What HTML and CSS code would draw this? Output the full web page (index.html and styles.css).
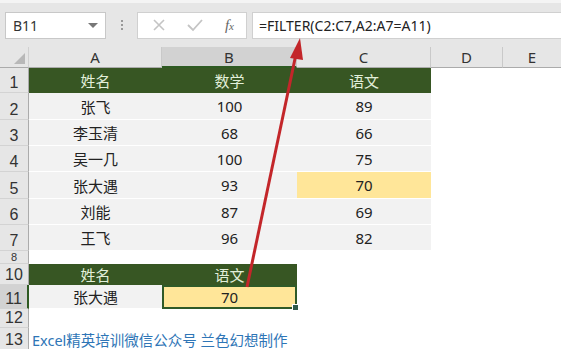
FILE: index.html
```html
<!DOCTYPE html>
<html lang="zh">
<head>
	<meta charset="UTF-8">
	<title>FILTER</title>
	<link rel="stylesheet" href="styles.css">
</head>
<body>
	<div class="bar">
		<div class="namebox">
			<span>B11</span>
			<span class="caret"></span>
		</div>
		<div class="dots"></div>
		<div class="fxbox">
			<svg width="14" height="14" viewBox="0 0 14 14"><path d="M2 2L12 12M12 2L2 12" stroke="#c4c4c4" stroke-width="1.6"/></svg>
			<svg width="16" height="14" viewBox="0 0 16 14"><path d="M1 7L6 12L15 2" stroke="#c4c4c4" stroke-width="1.8" fill="none"/></svg>
			<span class="fx"><i>f</i><small>x</small></span>
		</div>
		<div class="formula">=FILTER(C2:C7,A2:A7=A11)</div>
	</div>

	<div class="sheet">
		<div class="corner"><span class="tri"></span></div>
		<div class="colh">A</div>
		<div class="colh sel">B</div>
		<div class="colh">C</div>
		<div class="colh">D</div>
		<div class="colh last">E</div>

		<div class="rowh">1</div>
		<div class="cell head">姓名</div><div class="cell head">数学</div><div class="cell head">语文</div><div class="cell"></div><div class="cell"></div>

		<div class="rowh">2</div>
		<div class="cell data">张飞</div><div class="cell data">100</div><div class="cell data">89</div><div class="cell"></div><div class="cell"></div>

		<div class="rowh">3</div>
		<div class="cell data">李玉清</div><div class="cell data">68</div><div class="cell data">66</div><div class="cell"></div><div class="cell"></div>

		<div class="rowh">4</div>
		<div class="cell data">吴一几</div><div class="cell data">100</div><div class="cell data">75</div><div class="cell"></div><div class="cell"></div>

		<div class="rowh">5</div>
		<div class="cell data">张大遇</div><div class="cell data">93</div><div class="cell data hit">70</div><div class="cell"></div><div class="cell"></div>

		<div class="rowh">6</div>
		<div class="cell data">刘能</div><div class="cell data">87</div><div class="cell data">69</div><div class="cell"></div><div class="cell"></div>

		<div class="rowh">7</div>
		<div class="cell data">王飞</div><div class="cell data">96</div><div class="cell data">82</div><div class="cell"></div><div class="cell"></div>

		<div class="rowh small">8</div>
		<div class="cell"></div><div class="cell"></div><div class="cell"></div><div class="cell"></div><div class="cell"></div>

		<div class="rowh">10</div>
		<div class="cell head">姓名</div><div class="cell head">语文</div><div class="cell"></div><div class="cell"></div><div class="cell"></div>

		<div class="rowh sel">11</div>
		<div class="cell data">张大遇</div><div class="cell data hit active">70<span class="handle"></span></div><div class="cell"></div><div class="cell"></div><div class="cell"></div>

		<div class="rowh">12</div>
		<div class="cell"></div><div class="cell"></div><div class="cell"></div><div class="cell"></div><div class="cell"></div>

		<div class="rowh">13</div>
		<div class="cell note">Excel精英培训微信公众号 兰色幻想制作</div>
	</div>

	<svg class="arrow" width="561" height="349" viewBox="0 0 561 349">
		<line x1="247" y1="287" x2="296" y2="54" stroke="#c3262a" stroke-width="3"/>
		<polygon points="300,38 290,58 303,60" fill="#c3262a"/>
	</svg>
</body>
</html>
```

FILE: styles.css
```css
body{
	margin: 0;
	width: 561px;
	height: 349px;
	overflow: hidden;
	position: relative;
	font-family: "Noto Sans", "Noto Sans CJK SC", sans-serif;
	background: #fff;
}

.bar{
	border-top: 3px solid #f4f4f4;
	background: #e6e6e6;
	display: flex;
	align-items: center;
	padding-left: 5px;
	box-sizing: border-box;
	height: 47px;
}
.namebox{
	width: 101px;
	height: 27px;
	box-sizing: border-box;
	background: #fff;
	border: 1px solid #c8c8c8;
	display: flex;
	align-items: center;
	justify-content: space-between;
	padding: 0 7px 0 7px;
	font-size: 14px;
	color: #333;
}
.caret{
	width: 0;
	height: 0;
	border-left: 5px solid transparent;
	border-right: 5px solid transparent;
	border-top: 5px solid #777;
}
.dots{
	width: 2px;
	height: 11px;
	margin: 0 14px 0 15px;
	background: repeating-linear-gradient(#999 0 2px, transparent 2px 4px);
}
.fxbox{
	width: 110px;
	height: 27px;
	box-sizing: border-box;
	background: #fff;
	border: 1px solid #d0d0d0;
	display: flex;
	align-items: center;
	justify-content: space-between;
	padding: 0 12px 0 14px;
}
.fx{
	font-family: "Liberation Serif", serif;
	color: #666;
	font-size: 15px;
}
.fx small{
	font-size: 11px;
	font-style: italic;
}
.formula{
	margin-left: 5px;
	flex: 1;
	height: 27px;
	box-sizing: border-box;
	background: #fff;
	border: 1px solid #d0d0d0;
	border-right: none;
	padding-left: 6px;
	display: flex;
	align-items: center;
	font-size: 14px;
	color: #222;
}

.sheet{
	display: grid;
	grid-template-columns: 29px 133px 135px 134px 72px 58px;
	grid-template-rows: 21px 25px 27px 26px 26px 27px 26px 26px 13px 21px 24px 19px 22px;
}
.corner{
	background: #e6e6e6;
	border-right: 1px solid #d0d0d0;
	border-bottom: 1px solid #ababab;
	position: relative;
}
.tri{
	position: absolute;
	right: 3px;
	bottom: 3px;
	width: 0;
	height: 0;
	border-left: 11px solid transparent;
	border-bottom: 11px solid #b8b8b8;
}
.colh{
	background: #e6e6e6;
	border-right: 1px solid #c9c9c9;
	border-bottom: 1px solid #ababab;
	text-align: center;
	font-size: 15px;
	line-height: 21px;
	color: #333;
}
.colh.sel{
	background: #d2d2d2;
	border-bottom: 2px solid #2e5a22;
}
.colh.last{
	border-right: none;
}
.rowh{
	background: #e6e6e6;
	border-bottom: 1px solid #d3d3d3;
	border-right: 1px solid #ababab;
	font-family: "Liberation Sans", sans-serif;
	font-size: 16px;
	line-height: 16px;
	color: #333;
	display: flex;
	align-items: flex-end;
	justify-content: center;
	padding-bottom: 1px;
	box-sizing: border-box;
}
.rowh.small{
	font-size: 11px;
	line-height: 11px;
	padding-bottom: 0;
	align-items: center;
}
.rowh.sel{
	background: #d2d2d2;
	border-right: 2px solid #2e5a22;
}

.cell{
	font-size: 15px;
	display: flex;
	align-items: center;
	justify-content: center;
	color: #222;
	position: relative;
}
.head{
	background: #375623;
	color: #e2efda;
}
.data{
	background: #f2f2f2;
	border-bottom: 1px solid #fff;
}
.hit{
	background: #ffe699;
}
.active{
	border: 2px solid #2f5a28;
	box-sizing: border-box;
}
.handle{
	position: absolute;
	right: -4px;
	bottom: -4px;
	width: 5px;
	height: 5px;
	background: #2f5a4a;
	border: 1px solid #fff;
}
.note{
	grid-column: span 5;
	justify-content: flex-start;
	padding-left: 3px;
	color: #2e75b6;
	font-size: 14.5px;
	white-space: nowrap;
}

.arrow{
	position: absolute;
	left: 0;
	top: 0;
	pointer-events: none;
}
```
